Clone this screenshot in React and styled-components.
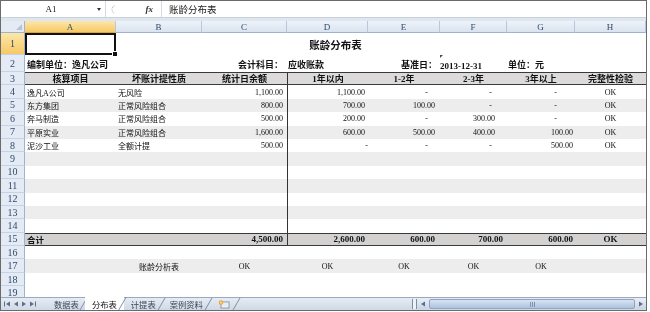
import React from 'react';
import styled, { createGlobalStyle } from 'styled-components';

const GlobalStyle = createGlobalStyle`
    html, body {
        margin: 0;
        padding: 0;
        background: #fff;
    }
    body {
        font-family: "Liberation Serif", "Noto Sans CJK SC", serif;
        color: #111;
    }
`;

const BAND_COLS = '91px 86px 85px 81px 72px 67px 68px 71px';

const Frame = styled.div`
    width: 645px;
    height: 309px;
    border: 1px solid #6b6b6b;
    display: flex;
    flex-direction: column;
    overflow: hidden;
    will-change: transform;
`;

const FormulaBar = styled.div`
    display: flex;
    height: 16px;
    flex: none;
    background: #fff;
`;

const NameBox = styled.div`
    width: 104px;
    display: flex;
    align-items: center;
    border-right: 1px solid #d3dae4;
    font-size: 9px;
    color: #222;
`;

const NameText = styled.span`
    flex: 1;
    text-align: center;
    padding-left: 4px;
`;

const DropArrow = styled.span`
    width: 0;
    height: 0;
    margin-right: 4px;
    border-left: 2px solid transparent;
    border-right: 2px solid transparent;
    border-top: 3px solid #333;
`;

const FxZone = styled.div`
    width: 55px;
    display: flex;
    align-items: center;
    justify-content: space-between;
    padding: 0 8px 0 3px;
    box-sizing: border-box;
`;

const Fx = styled.span`
    font-style: italic;
    font-weight: bold;
    font-size: 9px;
    color: #333;
`;

const FormulaInput = styled.div`
    flex: 1;
    display: flex;
    align-items: center;
    padding-left: 7px;
    border-left: 1px solid #d3dae4;
    font-family: "Noto Sans CJK SC", sans-serif;
    font-size: 9.5px;
    color: #222;
`;

const Strip = styled.div`
    height: 4px;
    flex: none;
    background: #dfe6ef;
    border-top: 1px solid #c8d0db;
    box-sizing: border-box;
`;

const Sheet = styled.div`
    height: 276px;
    flex: none;
    overflow: hidden;
    display: flex;
    flex-direction: column;
`;

const Row = styled.div`
    display: flex;
    flex: none;
    height: ${p => p.$h}px;
`;

const Corner = styled.div`
    width: 24px;
    flex: none;
    background: #e4ebf5;
    border-right: 1px solid #9db3cf;
    border-bottom: 1px solid #9db3cf;
    box-sizing: border-box;
    display: flex;
    align-items: flex-end;
    justify-content: flex-end;
    padding: 0 2px 2px 0;
`;

const ColHead = styled.div`
    display: flex;
    align-items: center;
    justify-content: center;
    font-size: 9px;
    color: #2f4a6b;
    border-right: 1px solid #b7c7db;
    border-bottom: 1px solid ${p => (p.$active ? '#e1a63a' : '#9db3cf')};
    background: ${p =>
        p.$active
            ? 'linear-gradient(#fce7a8, #f6c966)'
            : 'linear-gradient(#eef3f9, #d9e3ef)'};
`;

const RowHead = styled.div`
    width: 24px;
    flex: none;
    box-sizing: border-box;
    display: flex;
    align-items: center;
    justify-content: center;
    font-size: 10px;
    color: #2f4a6b;
    border-right: 1px solid #9db3cf;
    border-bottom: 1px solid #c5d3e6;
    background: ${p =>
        p.$active ? 'linear-gradient(#fce7a8, #f6c966)' : '#e4ebf5'};
`;

const Band = styled.div`
    flex: 1;
    display: grid;
    grid-template-columns: ${BAND_COLS};
    grid-template-rows: 100%;
    box-sizing: border-box;
    background: ${p => p.$bg || '#fff'};
    ${p => p.$ruled && 'border-top: 1px solid #3a3a3a; border-bottom: 1px solid #3a3a3a;'}
`;

const Cell = styled.div`
    display: flex;
    align-items: ${p => (p.$bottom ? 'flex-end' : 'center')};
    justify-content: ${p => p.$align || 'flex-start'};
    padding: 0 ${p => p.$pr || 0}px ${p => (p.$bottom ? 1 : 0)}px ${p => p.$pl || 0}px;
    box-sizing: border-box;
    white-space: nowrap;
    min-width: 0;
    position: relative;
    font-size: ${p => p.$size || 8}px;
    font-weight: ${p => (p.$bold ? 'bold' : 'normal')};
    color: #111;
    border-left: ${p => (p.$divider ? '1px solid #333' : 'none')};
`;

const Title = styled.div`
    grid-column: 1 / -1;
    grid-row: 1;
    display: flex;
    align-items: center;
    justify-content: center;
    font-weight: bold;
    font-size: 10.5px;
`;

const Selection = styled.div`
    grid-column: 1;
    grid-row: 1;
    border: 2px solid #111;
    position: relative;
`;

const Handle = styled.span`
    position: absolute;
    right: -4px;
    bottom: -4px;
    width: 4px;
    height: 4px;
    background: #111;
    border: 1px solid #fff;
`;

const ErrorMark = styled.span`
    position: absolute;
    left: 0;
    top: 0;
    border-top: 3px solid #2f5f32;
    border-right: 3px solid transparent;
`;

const TabBar = styled.div`
    height: 13px;
    flex: none;
    display: flex;
    align-items: stretch;
    background: linear-gradient(#e6ecf4, #cfd9e6);
    border-top: 1px solid #9aa9bf;
    box-sizing: border-box;
`;

const NavGroup = styled.div`
    display: flex;
    align-items: center;
    gap: 4px;
    padding: 0 3px 0 3px;
    width: 47px;
    box-sizing: border-box;
`;

const Tab = styled.div`
    position: relative;
    display: flex;
    align-items: center;
    padding: 0 ${p => p.$px || 6}px;
    font-family: "Noto Sans CJK SC", sans-serif;
    font-size: 8.3px;
    color: ${p => (p.$active ? '#111' : '#3c4858')};
    background: ${p => (p.$active ? '#fff' : 'transparent')};
    margin-top: ${p => (p.$active ? '-1px' : '0')};

    &::after {
        content: '';
        position: absolute;
        right: 1px;
        top: 0;
        bottom: 0;
        width: 1px;
        background: #7f8ea5;
        transform: skewX(-30deg);
    }
`;

const Spacer = styled.div`
    flex: 1;
`;

const ScrollBar = styled.div`
    width: 234px;
    display: flex;
    align-items: stretch;
    padding: 1px 0;
    box-sizing: border-box;
`;

const Splitter = styled.div`
    width: 3px;
    border-left: 1px solid #7f8ea5;
    border-right: 1px solid #7f8ea5;
    background: #eef2f7;
    margin-right: 1px;
`;

const ScrollButton = styled.div`
    width: 10px;
    display: flex;
    align-items: center;
    justify-content: center;
    background: linear-gradient(#e8eef6, #c9d5e4);
`;

const Thumb = styled.div`
    flex: 1;
    display: flex;
    align-items: center;
    justify-content: center;
    background: linear-gradient(#d7e3f2, #aec3de);
    border: 1px solid #8ea4c2;
    border-radius: 2px;
    margin: 0 1px;
`;

const Grip = styled.span`
    width: 5px;
    height: 5px;
    background: repeating-linear-gradient(90deg, #7d93b2 0 1px, transparent 1px 2px);
`;

const Tri = ({ dir, bar }) => (
    <svg width={bar ? 6 : 4} height="6" viewBox={bar ? '0 0 6 6' : '0 0 4 6'}>
        {dir === 'left' ? (
            <>
                {bar && <rect x="0" y="0.5" width="1" height="5" fill="#5b6e8a" />}
                <polygon points={bar ? '6,0.5 2,3 6,5.5' : '4,0.5 0,3 4,5.5'} fill="#5b6e8a" />
            </>
        ) : (
            <>
                <polygon points="0,0.5 4,3 0,5.5" fill="#5b6e8a" />
                {bar && <rect x="5" y="0.5" width="1" height="5" fill="#5b6e8a" />}
            </>
        )}
    </svg>
);

const NewSheetIcon = () => (
    <svg width="14" height="9" viewBox="0 0 14 9">
        <rect x="4" y="2" width="8" height="6" fill="#fff" stroke="#6f7f96" strokeWidth="0.8" />
        <line x1="5" y1="4" x2="11" y2="4" stroke="#b5c2d3" strokeWidth="0.6" />
        <line x1="5" y1="6" x2="11" y2="6" stroke="#b5c2d3" strokeWidth="0.6" />
        <circle cx="4" cy="2.5" r="2.2" fill="#f0a23a" />
        <circle cx="4" cy="2.5" r="1" fill="#fde49a" />
    </svg>
);

const DASH = { 4: 12, 5: 15, 6: 18, 7: 13 };
const NUM_PAD = { 3: 4, 4: 3, 5: 5, 6: 12, 7: 2 };

const data = [
    ['逸凡A公司', '无风险', '1,100.00', '1,100.00', '-', '-', '-', 'OK'],
    ['东方集团', '正常风险组合', '800.00', '700.00', '100.00', '-', '-', 'OK'],
    ['奔马制造', '正常风险组合', '500.00', '200.00', '-', '300.00', '-', 'OK'],
    ['平原实业', '正常风险组合', '1,600.00', '600.00', '500.00', '400.00', '100.00', 'OK'],
    ['泥沙工业', '全额计提', '500.00', '-', '-', '-', '500.00', 'OK'],
];

const headers = ['核算项目', '坏账计提性质', '统计日余额', '1年以内', '1-2年', '2-3年', '3年以上', '完整性检验'];
const totals = ['合计', '', '4,500.00', '2,600.00', '600.00', '700.00', '600.00', 'OK'];
const totalPad = { 3: 4, 4: 3, 5: 5, 6: 4, 7: 2 };

const STRIPE = '#ededed';
const RH = 13.4;

const DataCell = ({ value, col }) => {
    const idx = col + 1;
    if (idx <= 2) {
        return (
            <Cell $pl={2} $size={8}>
                {value}
            </Cell>
        );
    }
    if (idx === 8) {
        return <Cell $align="center" $size={8}>{value}</Cell>;
    }
    const isDash = value === '-';
    return (
        <Cell
            $align="flex-end"
            $pr={isDash ? DASH[col] : NUM_PAD[idx]}
            $divider={idx === 4}
            $size={8}
        >
            {value}
        </Cell>
    );
};

const App = () => {
    const emptyRows = [9, 10, 11, 12, 13, 14];

    return (
        <>
            <GlobalStyle />
            <Frame>
                <FormulaBar>
                    <NameBox>
                        <NameText>A1</NameText>
                        <DropArrow />
                    </NameBox>
                    <FxZone>
                        <svg width="7" height="9" viewBox="0 0 7 9">
                            <path d="M5.5 0.8 A4 4 0 0 0 5.5 8.2" fill="none" stroke="#b8c3d2" strokeWidth="1.2" strokeDasharray="1 1" />
                        </svg>
                        <Fx>fx</Fx>
                    </FxZone>
                    <FormulaInput>账龄分布表</FormulaInput>
                </FormulaBar>
                <Strip />
                <Sheet>
                    <Row $h={12}>
                        <Corner>
                            <svg width="6" height="6" viewBox="0 0 6 6">
                                <polygon points="6,0 6,6 0,6" fill="#b3c2d6" />
                            </svg>
                        </Corner>
                        <Band>
                            {['A', 'B', 'C', 'D', 'E', 'F', 'G', 'H'].map((l, i) => (
                                <ColHead key={l} $active={i === 0}>
                                    {l}
                                </ColHead>
                            ))}
                        </Band>
                    </Row>

                    <Row $h={22}>
                        <RowHead $active>1</RowHead>
                        <Band>
                            <Title>账龄分布表</Title>
                            <Selection>
                                <Handle />
                            </Selection>
                        </Band>
                    </Row>

                    <Row $h={17}>
                        <RowHead>2</RowHead>
                        <Band>
                            <Cell $pl={2} $bold $size={9} $bottom>编制单位：逸凡公司</Cell>
                            <Cell />
                            <Cell $align="flex-end" $pr={4} $bold $size={9} $bottom>会计科目：</Cell>
                            <Cell $pl={1} $bold $size={9} $bottom>应收账款</Cell>
                            <Cell $align="flex-end" $pr={3} $bold $size={9} $bottom>基准日：</Cell>
                            <Cell $bold $size={9} $bottom>
                                <ErrorMark />
                                2013-12-31
                            </Cell>
                            <Cell $pl={1} $bold $size={9} $bottom>单位：元</Cell>
                            <Cell />
                        </Band>
                    </Row>

                    <Row $h={RH}>
                        <RowHead>3</RowHead>
                        <Band $bg="#dcdada" $ruled>
                            {headers.map((h, i) => (
                                <Cell key={h} $align="center" $bold $size={9} $divider={i === 3}>
                                    {h}
                                </Cell>
                            ))}
                        </Band>
                    </Row>

                    {data.map((r, ri) => (
                        <Row key={ri} $h={RH}>
                            <RowHead>{ri + 4}</RowHead>
                            <Band $bg={ri % 2 === 1 ? STRIPE : '#fff'}>
                                {r.map((v, ci) => (
                                    <DataCell key={ci} value={v} col={ci} />
                                ))}
                            </Band>
                        </Row>
                    ))}

                    {emptyRows.map(n => (
                        <Row key={n} $h={RH}>
                            <RowHead>{n}</RowHead>
                            <Band $bg={n % 2 === 1 ? STRIPE : '#fff'}>
                                <Cell />
                                <Cell />
                                <Cell />
                                <Cell $divider />
                            </Band>
                        </Row>
                    ))}

                    <Row $h={RH}>
                        <RowHead>15</RowHead>
                        <Band $bg="#d4d1d1" $ruled>
                            {totals.map((v, i) => (
                                <Cell
                                    key={i}
                                    $bold
                                    $size={i === 0 ? 8.5 : 9}
                                    $align={i === 0 ? 'flex-start' : i === 7 ? 'center' : 'flex-end'}
                                    $pl={i === 0 ? 2 : 0}
                                    $pr={totalPad[i + 1] || 0}
                                    $divider={i === 3}
                                >
                                    {v}
                                </Cell>
                            ))}
                        </Band>
                    </Row>

                    <Row $h={RH}>
                        <RowHead>16</RowHead>
                        <Band />
                    </Row>

                    <Row $h={RH}>
                        <RowHead>17</RowHead>
                        <Band $bg={STRIPE}>
                            <Cell />
                            <Cell $align="center" $size={8}>账龄分析表</Cell>
                            {['OK', 'OK', 'OK', 'OK', 'OK'].map((v, i) => (
                                <Cell key={i} $align="center" $size={8}>
                                    {v}
                                </Cell>
                            ))}
                            <Cell />
                        </Band>
                    </Row>

                    <Row $h={RH}>
                        <RowHead>18</RowHead>
                        <Band />
                    </Row>

                    <Row $h={RH}>
                        <RowHead>19</RowHead>
                        <Band />
                    </Row>
                </Sheet>

                <TabBar>
                    <NavGroup>
                        <Tri dir="left" bar />
                        <Tri dir="left" />
                        <Tri dir="right" />
                        <Tri dir="right" bar />
                    </NavGroup>
                    <Tab>数据表</Tab>
                    <Tab $active $px={7}>分布表</Tab>
                    <Tab $px={7}>计提表</Tab>
                    <Tab $px={7}>案例资料</Tab>
                    <Tab $px={7}>
                        <NewSheetIcon />
                    </Tab>
                    <Spacer />
                    <ScrollBar>
                        <Splitter />
                        <ScrollButton>
                            <Tri dir="left" />
                        </ScrollButton>
                        <Thumb>
                            <Grip />
                        </Thumb>
                        <ScrollButton>
                            <Tri dir="right" />
                        </ScrollButton>
                    </ScrollBar>
                </TabBar>
            </Frame>
        </>
    );
};

export default App;
